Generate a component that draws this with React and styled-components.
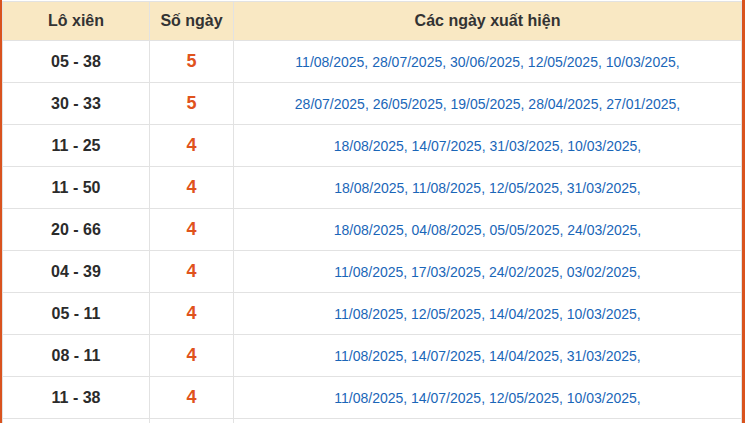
import React from "react";
import styled, { createGlobalStyle } from "styled-components";

const GlobalStyle = createGlobalStyle`
  body {
    margin: 0;
    background: #fff;
    font-family: "Liberation Sans", Arial, sans-serif;
  }
`;

const Frame = styled.div`
  width: 740px;
  padding-top: 1px;
  border-left: 2px solid #d9531e;
  border-right: 3px solid #d9531e;
`;

const Table = styled.table`
  width: 100%;
  border-collapse: collapse;
  table-layout: fixed;
`;

const HeadCell = styled.th`
  width: ${(p) => p.$w || "auto"};
  height: 38px;
  padding: 0;
  background: #f9e8c3;
  border: 1px solid #e2e2e2;
  color: #333;
  font-size: 16px;
  font-weight: bold;
  text-align: center;
  vertical-align: middle;
`;

const Cell = styled.td`
  height: 41px;
  padding: 0;
  border: 1px solid #e2e2e2;
  text-align: center;
  vertical-align: middle;
`;

const Pair = styled(Cell)`
  color: #2b2b2b;
  font-size: 16px;
  font-weight: bold;
`;

const Count = styled(Cell)`
  color: #e0531c;
  font-size: 18px;
  font-weight: bold;
`;

const Dates = styled(Cell)`
  color: #1a66b8;
  font-size: 14px;
`;

const rows = [
  ["05 - 38", 5, ["11/08/2025", "28/07/2025", "30/06/2025", "12/05/2025", "10/03/2025"]],
  ["30 - 33", 5, ["28/07/2025", "26/05/2025", "19/05/2025", "28/04/2025", "27/01/2025"]],
  ["11 - 25", 4, ["18/08/2025", "14/07/2025", "31/03/2025", "10/03/2025"]],
  ["11 - 50", 4, ["18/08/2025", "11/08/2025", "12/05/2025", "31/03/2025"]],
  ["20 - 66", 4, ["18/08/2025", "04/08/2025", "05/05/2025", "24/03/2025"]],
  ["04 - 39", 4, ["11/08/2025", "17/03/2025", "24/02/2025", "03/02/2025"]],
  ["05 - 11", 4, ["11/08/2025", "12/05/2025", "14/04/2025", "10/03/2025"]],
  ["08 - 11", 4, ["11/08/2025", "14/07/2025", "14/04/2025", "31/03/2025"]],
  ["11 - 38", 4, ["11/08/2025", "14/07/2025", "12/05/2025", "10/03/2025"]],
];

export default function App() {
  return (
    <>
      <GlobalStyle />
      <Frame>
        <Table>
          <thead>
            <tr>
              <HeadCell $w="146px">Lô xiên</HeadCell>
              <HeadCell $w="83px">Số ngày</HeadCell>
              <HeadCell>Các ngày xuất hiện</HeadCell>
            </tr>
          </thead>
          <tbody>
            {rows.map(([pair, count, dates]) => (
              <tr key={pair}>
                <Pair>{pair}</Pair>
                <Count>{count}</Count>
                <Dates>{dates.map((d) => d + ", ").join("")}</Dates>
              </tr>
            ))}
            <tr>
              <Cell />
              <Cell />
              <Cell />
            </tr>
          </tbody>
        </Table>
      </Frame>
    </>
  );
}
